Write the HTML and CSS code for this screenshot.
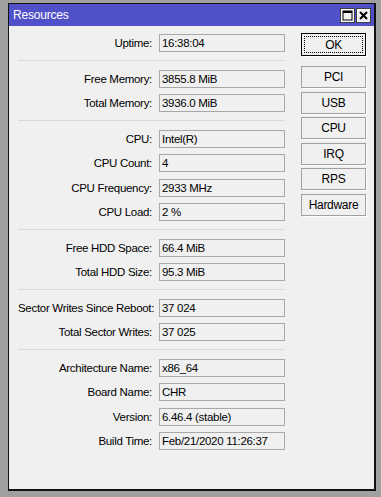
FILE: index.html
```html
<!DOCTYPE html>
<html>
<head>
<meta charset="utf-8">
<link rel="stylesheet" href="styles.css">
</head>
<body>
<div class="window">
  <div class="titlebar">
    <span class="title">Resources</span>
    <div class="tb-btns">
      <span class="tb-btn"><svg width="11" height="11" viewBox="0 0 11 11"><rect x="1" y="1" width="9" height="9" fill="none" stroke="#000" stroke-width="1"/><rect x="1" y="1" width="9" height="2" fill="#000"/></svg></span>
      <span class="tb-btn"><svg width="11" height="11" viewBox="0 0 11 11"><path d="M2 2 L9 9 M9 2 L2 9" stroke="#000" stroke-width="2"/></svg></span>
    </div>
  </div>
  <div class="content">
    <div class="form">
      <div class="group">
        <div class="row"><span class="lbl">Uptime:</span><span class="val">16:38:04</span></div>
      </div>
      <div class="sep"></div>
      <div class="group">
        <div class="row"><span class="lbl">Free Memory:</span><span class="val">3855.8 MiB</span></div>
        <div class="row"><span class="lbl">Total Memory:</span><span class="val">3936.0 MiB</span></div>
      </div>
      <div class="sep"></div>
      <div class="group">
        <div class="row"><span class="lbl">CPU:</span><span class="val">Intel(R)</span></div>
        <div class="row"><span class="lbl">CPU Count:</span><span class="val">4</span></div>
        <div class="row"><span class="lbl">CPU Frequency:</span><span class="val">2933 MHz</span></div>
        <div class="row"><span class="lbl">CPU Load:</span><span class="val">2 %</span></div>
      </div>
      <div class="sep"></div>
      <div class="group">
        <div class="row"><span class="lbl">Free HDD Space:</span><span class="val">66.4 MiB</span></div>
        <div class="row"><span class="lbl">Total HDD Size:</span><span class="val">95.3 MiB</span></div>
      </div>
      <div class="sep"></div>
      <div class="group">
        <div class="row"><span class="lbl">Sector Writes Since Reboot:</span><span class="val">37 024</span></div>
        <div class="row"><span class="lbl">Total Sector Writes:</span><span class="val">37 025</span></div>
      </div>
      <div class="sep"></div>
      <div class="group">
        <div class="row"><span class="lbl">Architecture Name:</span><span class="val">x86_64</span></div>
        <div class="row"><span class="lbl">Board Name:</span><span class="val">CHR</span></div>
        <div class="row"><span class="lbl">Version:</span><span class="val">6.46.4 (stable)</span></div>
        <div class="row"><span class="lbl">Build Time:</span><span class="val">Feb/21/2020 11:26:37</span></div>
      </div>
    </div>
    <div class="buttons">
      <div class="btn btn-ok">OK</div>
      <div class="btn-list">
        <div class="btn">PCI</div>
        <div class="btn">USB</div>
        <div class="btn">CPU</div>
        <div class="btn">IRQ</div>
        <div class="btn">RPS</div>
        <div class="btn">Hardware</div>
      </div>
    </div>
  </div>
</div>
</body>
</html>
```
FILE: styles.css
```css
html, body {
  margin: 0;
}
body {
  background: #a0a0a0;
  font-family: "Liberation Sans", Arial, sans-serif;
  font-size: 11.5px;
  letter-spacing: -0.3px;
  color: #000;
  padding: 3px 0 0 8px;
  height: 497px;
  box-sizing: border-box;
}
.window {
  width: 368px;
  height: 488px;
  box-sizing: border-box;
  border: 1px solid #111;
  border-right-width: 2px;
  border-bottom-width: 2px;
  background: #f0f0f0;
  display: flex;
  flex-direction: column;
}
.titlebar {
  height: 22px;
  background: #5050c8;
  display: flex;
  align-items: center;
  justify-content: space-between;
  padding: 0 3px 0 4px;
  color: #fff;
  font-size: 12px;
  letter-spacing: -0.2px;
}
.tb-btns {
  display: flex;
  gap: 1px;
}
.tb-btn {
  width: 15px;
  height: 15px;
  box-sizing: border-box;
  background: #f0f0f0;
  border: 1px solid #404040;
  box-shadow: inset 1px 1px 0 #fff;
  display: flex;
  align-items: center;
  justify-content: center;
}
.content {
  display: flex;
  padding: 7px 0 0 9px;
}
.form {
  width: 267px;
  padding-top: 1px;
}
.group {
  display: flex;
  flex-direction: column;
  gap: 6.5px;
}
.row {
  display: flex;
  align-items: center;
  height: 18px;
}
.lbl {
  width: 134px;
  text-align: right;
  margin-right: 7px;
  white-space: nowrap;
}
.val {
  width: 126px;
  height: 18px;
  box-sizing: border-box;
  border: 1px solid #a8a8a8;
  padding-left: 2px;
  line-height: 16px;
  white-space: nowrap;
}
.sep {
  height: 1px;
  background: #d9d9d9;
  margin: 8.25px 0;
}
.buttons {
  margin-left: 16px;
  width: 65px;
  display: flex;
  flex-direction: column;
}
.btn {
  height: 22px;
  box-sizing: border-box;
  border: 1px solid #a0a0a0;
  box-shadow: 1px 1px 0 #fff;
  display: flex;
  align-items: center;
  justify-content: center;
  font-size: 12px;
}
.btn-ok {
  position: relative;
  height: 23px;
  border-color: #000;
}
.btn-ok::after {
  content: "";
  position: absolute;
  inset: 2px;
  border: 1px dotted #000;
}
.btn-list {
  margin-top: 10px;
  display: flex;
  flex-direction: column;
  gap: 3.5px;
}
```
